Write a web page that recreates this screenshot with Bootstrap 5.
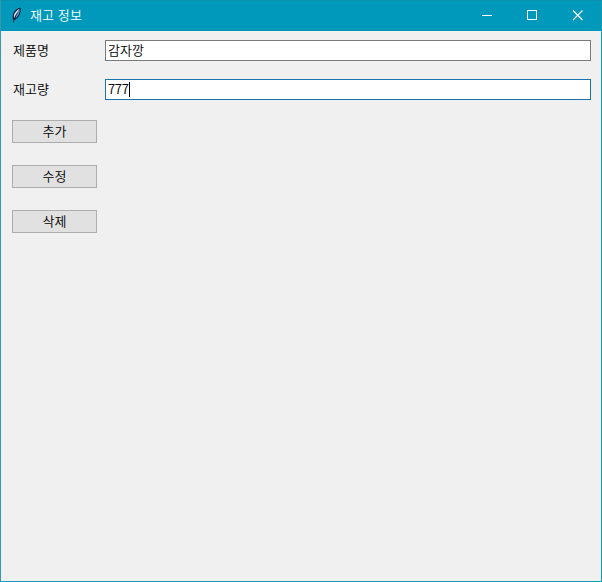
<!DOCTYPE html>
<html lang="ko">
<head>
<meta charset="utf-8">
<meta name="viewport" content="width=device-width, initial-scale=1">
<title>재고 정보</title>
<link href="https://cdn.jsdelivr.net/npm/bootstrap@5.3.0/dist/css/bootstrap.min.css" rel="stylesheet">
<style>
body { font: 350 13px/19px "Noto Sans CJK KR", sans-serif; color: #000; }
.app-window { border: 1px solid #189ab2; border-left-color: #3b97a6; border-top-color: #0c90b0; background: #f0f0f0; }
.title-bar { height: 30px; background: #0099bc; color: #fff; padding: 0 1px 2px 10px; }
.title-text { margin-left: 8px; padding-bottom: 1px; letter-spacing: .1px; }
.win-btn { width: 45px; height: 28px; padding-top: 1px; }
.win-btn svg { display: block; }
.form-area { padding: 9px 10px 0 11px; }
.field-row { height: 21px; margin-bottom: 18px; }
.field-label { width: 93px; padding: 0 0 2px 1px; }
.entry { height: 21px; border: 1px solid #7a7a7a; border-radius: 0; padding: 0 2px 2px; line-height: 17px; background: #fff; }
.entry-focus { border-color: #1a75ae; }
.digits { letter-spacing: -.3px; }
.caret { width: 1px; height: 15px; margin-top: 2px; background: #000; }
.actions { padding-top: 2px; gap: 22px; }
.tk-btn { width: 85px; height: 23px; border: 1px solid #adadad; border-radius: 0; background: #e1e1e1; padding: 0 0 2px; font-size: 13px; font-weight: 350; line-height: 19px; color: #000; }
</style>
<script src="https://cdn.jsdelivr.net/npm/bootstrap@5.3.0/dist/js/bootstrap.bundle.min.js"></script>
</head>
<body>
<div class="app-window vh-100 overflow-hidden">
  <header class="title-bar d-flex align-items-center">
    <svg width="11" height="16" viewBox="0 0 11 16" aria-hidden="true">
      <path d="M9.5.4C6.6.8 3 3.9 2.1 7.2 1.4 9.6 1.6 11.5 2.5 13.2 5.4 12.6 8.3 9.5 9.1 6.3 9.6 4.2 10 2.3 9.5.4Z" fill="#07172b"/>
      <path d="M8.8 1.5C6.4 2.7 3.7 5.2 3 7.9 2.7 9.3 2.8 10.4 3.1 11.4L6.2 5.8Z" fill="#d3eaff"/>
      <path d="M8.8 2C8.7 5.7 7.4 8.9 4.3 11.4L5.8 6.7Z" fill="#6ba5e0"/>
      <path d="M6.6 5.8C4.8 8 3.3 11 2.4 15.5" fill="none" stroke="#071426" stroke-width=".8"/>
    </svg>
    <div class="title-text flex-grow-1">재고 정보</div>
    <div class="win-btn d-flex align-items-center justify-content-center" role="button" aria-label="최소화">
      <svg width="11" height="11" shape-rendering="crispEdges"><path d="M0 5.5h10" stroke="#fff"/></svg>
    </div>
    <div class="win-btn d-flex align-items-center justify-content-center" role="button" aria-label="최대화">
      <svg width="11" height="11" shape-rendering="crispEdges"><path d="M.5.5h9v9h-9z" fill="none" stroke="#fff"/></svg>
    </div>
    <div class="win-btn d-flex align-items-center justify-content-center" role="button" aria-label="닫기">
      <svg width="11" height="11"><path d="M1 .5l9.5 9.5M10.5 .5L1 10" stroke="#fff" stroke-width="1.1"/></svg>
    </div>
  </header>
  <main class="form-area">
    <div class="field-row d-flex align-items-center">
      <div class="field-label">제품명</div>
      <div class="entry flex-grow-1 d-flex align-items-center" role="textbox">감자깡</div>
    </div>
    <div class="field-row d-flex align-items-center">
      <div class="field-label">재고량</div>
      <div class="entry entry-focus flex-grow-1 d-flex align-items-center" role="textbox"><span class="digits">777</span><span class="caret"></span></div>
    </div>
    <div class="actions d-flex flex-column align-items-start">
      <button type="button" class="btn tk-btn">추가</button>
      <button type="button" class="btn tk-btn">수정</button>
      <button type="button" class="btn tk-btn">삭제</button>
    </div>
  </main>
</div>
</body>
</html>
